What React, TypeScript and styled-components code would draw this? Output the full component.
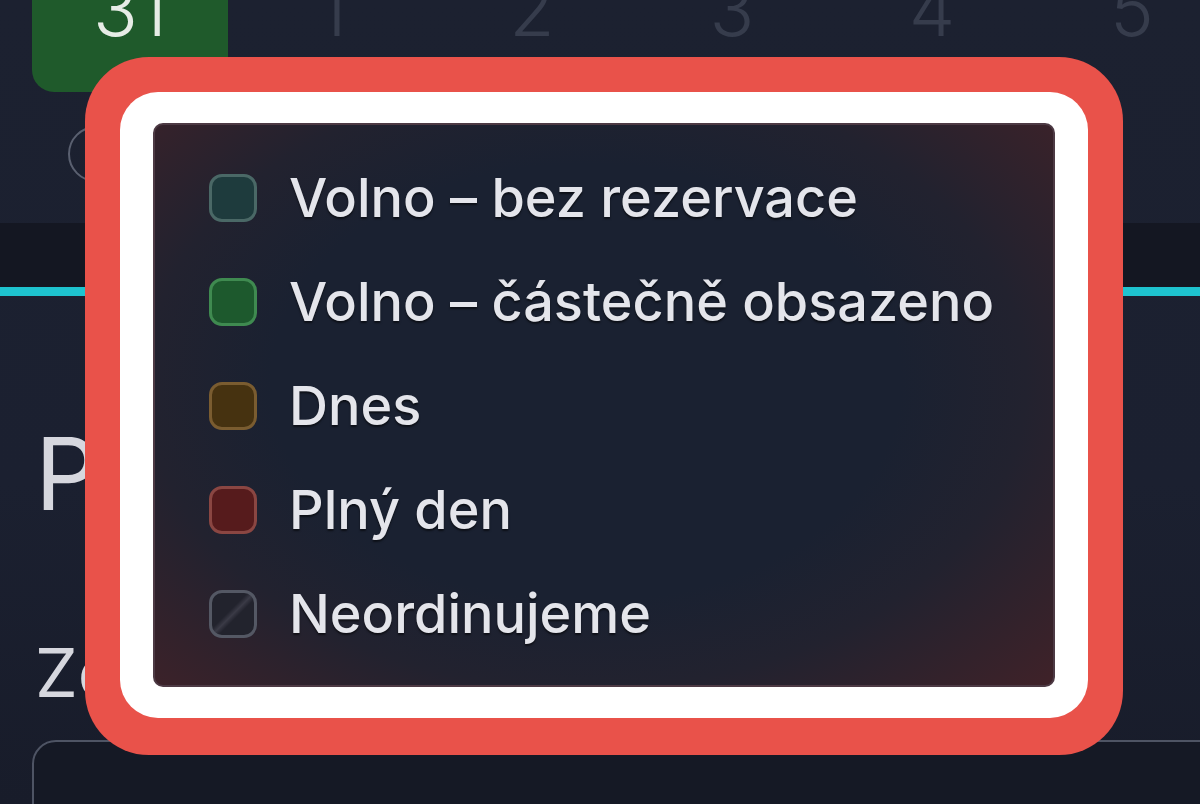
import React from "react";
import styled, { createGlobalStyle } from "styled-components";

const Global = createGlobalStyle`
  html, body { margin: 0; padding: 0; }
  body {
    background: #1b2030;
    font-family: Inter, "Noto Sans", sans-serif;
    overflow: hidden;
  }
`;

const Page = styled.div`
  position: relative;
  width: 1200px;
  height: 804px;
  overflow: hidden;
  background: linear-gradient(180deg, #1c2130 0%, #1b2030 60%, #181c2a 100%);
`;

const Strip = styled.div`
  display: flex;
  padding-left: 32px;
  height: 267px;
  margin-top: -44px;
  box-sizing: border-box;
`;

const DayCell = styled.div<{ $active?: boolean }>`
  flex: none;
  position: relative;
  width: ${(p) => (p.$active ? 196 : 200)}px;
  margin-right: ${(p) => (p.$active ? 4 : 0)}px;
  height: 136px;
  display: flex;
  justify-content: center;
  align-items: flex-end;
  padding-bottom: 46px;
  box-sizing: border-box;
  border-radius: 0 0 22px 22px;
  background: ${(p) => (p.$active ? "#1f5a2b" : "transparent")};
  color: ${(p) => (p.$active ? "#e6ece6" : "#363c4c")};
  font-size: 74px;
  font-weight: 300;
  line-height: 1;
`;

const Dot = styled.div`
  position: absolute;
  left: 68px;
  top: 126px;
  width: 52px;
  height: 52px;
  border-radius: 50%;
  border: 2px solid #5a6070;
`;

const Band = styled.div`
  height: 64px;
  background: #141722;
  border-bottom: 9px solid #1ec3cf;
`;

const Content = styled.div`
  padding: 128px 0 0 35px;
  display: flex;
  flex-direction: column;
  color: #d6d7de;
`;

const Heading = styled.div`
  font-size: 100px;
  font-weight: 400;
  line-height: 1;
`;

const Label = styled.div`
  margin-top: 114px;
  font-size: 68px;
  line-height: 1;
  font-weight: 400;
`;

const Input = styled.div`
  margin-top: 34px;
  margin-left: -3px;
  width: 1300px;
  height: 120px;
  border: 2px solid #4e5464;
  border-radius: 24px;
  background: #151925;
`;

const Frame = styled.div`
  position: absolute;
  left: 85px;
  top: 57px;
  padding: 35px 35px 37px 35px;
  background: #e9524a;
  border-radius: 64px;
`;

const Ring = styled.div`
  padding: 31px 33px 31px 33px;
  background: #ffffff;
  border-radius: 38px;
`;

const Popover = styled.div`
  width: 902px;
  height: 564px;
  box-sizing: border-box;
  padding: 49px 0 0 54px;
  border-radius: 10px;
  border: 2px solid #4d3a44;
  background:
    radial-gradient(ellipse 70% 78% at 48% 46%, #1a2131 0%, #1a2131 50%, #22222f 70%, #33222b 88%, #3e2229 100%);
  display: flex;
  flex-direction: column;
  gap: 56px;
`;

const Row = styled.div`
  display: flex;
  align-items: center;
  gap: 32px;
  height: 48px;
`;

const Swatch = styled.div<{ $fill: string; $border: string; $striped?: boolean }>`
  width: 48px;
  height: 48px;
  box-sizing: border-box;
  border-radius: 13px;
  border: 3px solid ${(p) => p.$border};
  background: ${(p) =>
    p.$striped
      ? `linear-gradient(135deg, ${p.$fill} 0%, ${p.$fill} 42%, #3a3a46 50%, ${p.$fill} 58%, ${p.$fill} 100%)`
      : p.$fill};
  flex: none;
`;

const RowText = styled.span`
  font-size: 54px;
  font-weight: 500;
  color: #e4e5eb;
  line-height: 1;
  text-shadow: 0 2px 2px rgba(0, 0, 0, 0.55);
  white-space: nowrap;
`;

const legend = [
  { label: "Volno – bez rezervace", fill: "#1e3b3d", border: "#4a6866" },
  { label: "Volno – částečně obsazeno", fill: "#1d592d", border: "#3f8a50" },
  { label: "Dnes", fill: "#463210", border: "#7a5c30" },
  { label: "Plný den", fill: "#561b1c", border: "#8a4642" },
  { label: "Neordinujeme", fill: "#22232d", border: "#545864", striped: true },
];

export default function App() {
  return (
    <Page>
      <Global />
      <Strip>
        <DayCell $active>31</DayCell>
        <DayCell>1</DayCell>
        <DayCell>2</DayCell>
        <DayCell>3</DayCell>
        <DayCell>4</DayCell>
        <DayCell>5</DayCell>
      </Strip>
      <Dot />
      <Band />
      <Content>
        <Heading>Přehled</Heading>
        <Label>Zobrazit</Label>
        <Input />
      </Content>
      <Frame>
        <Ring>
          <Popover>
            {legend.map((l) => (
              <Row key={l.label}>
                <Swatch $fill={l.fill} $border={l.border} $striped={l.striped} />
                <RowText>{l.label}</RowText>
              </Row>
            ))}
          </Popover>
        </Ring>
      </Frame>
    </Page>
  );
}
